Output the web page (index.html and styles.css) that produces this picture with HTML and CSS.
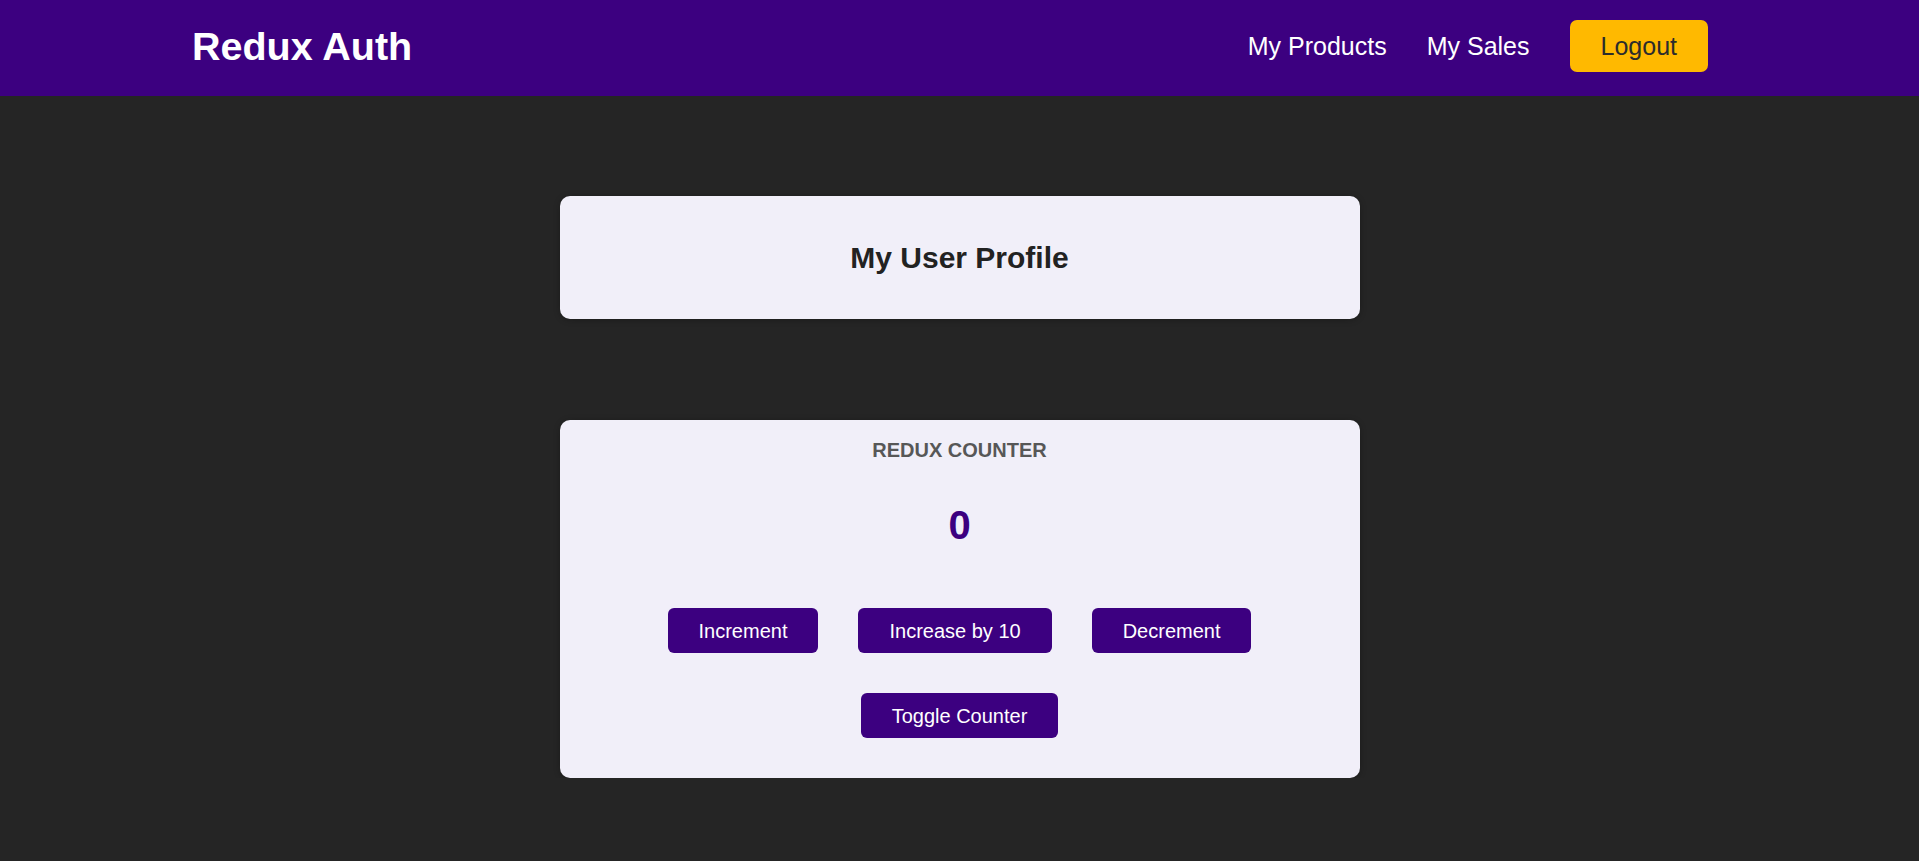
FILE: index.html
```html
<!DOCTYPE html>
<html lang="en">

<head>
    <meta charset="UTF-8">
    <meta name="viewport" content="width=device-width, initial-scale=1.0">
    <title>Redux Auth</title>
    <link rel="stylesheet" href="styles.css">
</head>

<body>
    <header class="header">
        <h1 class="logo">Redux Auth</h1>
        <nav>
            <ul class="nav-list">
                <li><a href="#">My Products</a></li>
                <li><a href="#">My Sales</a></li>
                <li><button class="logout">Logout</button></li>
            </ul>
        </nav>
    </header>

    <main class="main">
        <section class="card profile">
            <h2>My User Profile</h2>
        </section>

        <section class="card counter">
            <h1 class="counter-title">Redux Counter</h1>
            <div class="counter-value">0</div>
            <div class="actions">
                <button class="btn">Increment</button>
                <button class="btn">Increase by 10</button>
                <button class="btn">Decrement</button>
            </div>
            <div class="actions">
                <button class="btn">Toggle Counter</button>
            </div>
        </section>
    </main>
</body>

</html>
```

FILE: styles.css
```css
* {
    box-sizing: border-box;
}

body {
    margin: 0;
    font-family: "Liberation Sans", Arial, sans-serif;
    background-color: #252525;
}

.header {
    height: 96px;
    padding: 0 211px 4px 192px;
    display: flex;
    align-items: center;
    justify-content: space-between;
    background-color: #3c0080;
}

.logo {
    margin: 0;
    color: white;
    font-size: 39.5px;
}

.nav-list {
    list-style: none;
    margin: 0;
    padding: 0;
    display: flex;
    align-items: center;
    gap: 40px;
}

.nav-list a {
    color: white;
    text-decoration: none;
    font-size: 25px;
}

.logout {
    font-family: inherit;
    font-size: 25px;
    color: #2c2c2c;
    background-color: #ffb900;
    border: none;
    border-radius: 7px;
    padding: 12px 31px;
    line-height: 28px;
    cursor: pointer;
}

.main {
    padding-top: 100px;
    display: flex;
    flex-direction: column;
    align-items: center;
    gap: 101px;
}

.card {
    width: 800px;
    background-color: #f1eff9;
    border-radius: 10px;
    box-shadow: 0 1px 6px rgba(0, 0, 0, 0.25);
    text-align: center;
}

.profile {
    padding: 44px 0;
}

.profile h2 {
    margin: 0;
    font-size: 30px;
    line-height: 35px;
    color: #222;
}

.counter {
    padding: 19px 0 40px;
}

.counter-title {
    margin: 0;
    font-size: 20px;
    line-height: 22px;
    text-transform: uppercase;
    color: #575757;
}

.counter-value {
    margin: 41px 0 60px;
    font-size: 40px;
    line-height: 46px;
    font-weight: bold;
    color: #3c0080;
}

.actions {
    display: flex;
    justify-content: center;
    gap: 40px;
}

.actions + .actions {
    margin-top: 40px;
}

.btn {
    font-family: inherit;
    font-size: 20px;
    line-height: 24px;
    color: white;
    background-color: #3c0080;
    border: none;
    border-radius: 6px;
    padding: 10.5px 31px;
    cursor: pointer;
}
```
